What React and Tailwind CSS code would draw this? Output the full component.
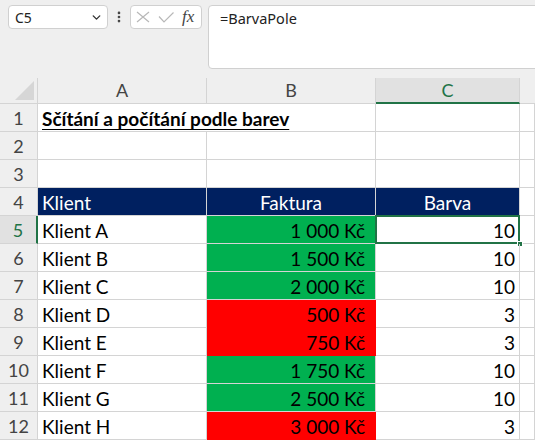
import { ChevronDown, EllipsisVertical } from 'lucide-react';

const rows = [
    { n: 5, client: 'Klient A', amount: '1 000 Kč', fill: 'green', color: 10 },
    { n: 6, client: 'Klient B', amount: '1 500 Kč', fill: 'green', color: 10 },
    { n: 7, client: 'Klient C', amount: '2 000 Kč', fill: 'green', color: 10 },
    { n: 8, client: 'Klient D', amount: '500 Kč', fill: 'red', color: 3 },
    { n: 9, client: 'Klient E', amount: '750 Kč', fill: 'red', color: 3 },
    { n: 10, client: 'Klient F', amount: '1 750 Kč', fill: 'green', color: 10 },
    { n: 11, client: 'Klient G', amount: '2 500 Kč', fill: 'green', color: 10 },
    { n: 12, client: 'Klient H', amount: '3 000 Kč', fill: 'red', color: 3 },
];

const fillClass = {
    green: 'bg-[#00b050] border-[#00b050]',
    red: 'bg-[#ff0000] border-[#ff0000]',
};

const cell = 'h-[28px] border-r border-b border-[#d4d4d4] flex items-center px-[4px] pt-[3px] overflow-visible whitespace-nowrap';
const rowHead = 'h-[28px] border-r border-b border-[#d4d4d4] bg-[#efefef] flex items-center justify-center pt-[2px] text-[18px] text-[#444]';

function FormulaBar() {
    return (
        <div className="flex h-[78px] items-start bg-[#efefef] pt-[5px] pl-[8px]" style={{ fontFamily: '"Noto Sans", "Open Sans", sans-serif' }}>
            {/* Name box */}
            <div className="flex h-[24px] w-[100px] items-center justify-between rounded-[4px] border border-[#d0d0d0] bg-white pl-[6px] pr-[4px] text-[14px] text-[#222]">
                <span>C5</span>
                <ChevronDown size={13} strokeWidth={2.6} className="text-[#333]" />
            </div>
            <div className="flex h-[24px] w-[22px] items-center justify-center">
                <EllipsisVertical size={14} strokeWidth={2.6} className="text-[#444]" />
            </div>
            {/* Cancel / enter / fx */}
            <div className="flex h-[24px] w-[72px] items-center rounded-[4px] border border-[#d0d0d0] bg-white pl-[5px]">
                <svg width="14" height="12" viewBox="0 0 14 12" className="mr-[8px]">
                    <path d="M1 1 L13 11 M13 1 L1 11" stroke="#b8b8b8" strokeWidth="1.2" fill="none" />
                </svg>
                <svg width="16" height="11" viewBox="0 0 16 11">
                    <path d="M1 4.5 L6 10 L15.5 0.5" stroke="#b8b8b8" strokeWidth="1.2" fill="none" />
                </svg>
                <span className="ml-[8px] text-[17px] italic text-[#444]" style={{ fontFamily: '"Liberation Serif", serif' }}>fx</span>
            </div>
            {/* Formula input */}
            <div className="ml-[6px] -mr-[10px] h-[64px] flex-1 rounded-[4px] border border-[#d0d0d0] bg-white pl-[11px] pt-[2px] text-[14.5px] text-[#222]">
                =BarvaPole
            </div>
        </div>
    );
}

export default function App() {
    return (
        <div className="h-[442px] w-[535px] overflow-hidden bg-white" style={{ fontFamily: 'Lato, "Noto Sans", sans-serif' }}>
            <FormulaBar />

            <div className="grid grid-cols-[38px_169px_169px_144px_1fr] text-[19px] text-black">
                {/* Column headers */}
                <div className="relative h-[26px] border-r border-b border-[#d4d4d4] bg-[#efefef]">
                    <svg className="absolute right-[3px] bottom-[3px]" width="19" height="19" viewBox="0 0 19 19">
                        <polygon points="19,0 19,19 0,19" fill="#d6d6d6" />
                    </svg>
                </div>
                <div className="flex h-[26px] items-center justify-center border-r border-b border-[#d4d4d4] bg-[#efefef] text-[18px] text-[#444]">A</div>
                <div className="flex h-[26px] items-center justify-center border-r border-b border-[#d4d4d4] bg-[#efefef] text-[18px] text-[#444]">B</div>
                <div className="flex h-[26px] items-center justify-center border-r border-b-2 border-[#d4d4d4] border-b-[#217346] bg-[#e1e1e1] text-[18px] text-[#217346]">C</div>
                <div className="h-[26px] border-b border-[#d4d4d4] bg-[#efefef]" />

                {/* Row 1 */}
                <div className={rowHead}>1</div>
                <div className={`${cell} border-r-0 font-bold underline underline-offset-[3px]`}>Sčítání a počítání podle barev</div>
                <div className={cell} />
                <div className={cell} />
                <div className={cell} />

                {/* Rows 2-3 */}
                {[2, 3].map((n) => (
                    <div key={n} className="contents">
                        <div className={rowHead}>{n}</div>
                        <div className={cell} />
                        <div className={cell} />
                        <div className={cell} />
                        <div className={cell} />
                    </div>
                ))}

                {/* Row 4: table header */}
                <div className={rowHead}>4</div>
                <div className={`${cell} border-[#002060] bg-[#002060] text-white`}>Klient</div>
                <div className={`${cell} justify-center border-[#002060] bg-[#002060] text-white`}>Faktura</div>
                <div className={`${cell} justify-center border-[#002060] bg-[#002060] text-white`}>Barva</div>
                <div className={cell} />

                {/* Data rows */}
                {rows.map((r) => (
                    <div key={r.n} className="contents">
                        <div
                            className={
                                r.n === 5
                                    ? 'flex h-[28px] items-center justify-center border-r-2 border-b border-[#d4d4d4] border-r-[#217346] bg-[#e1e1e1] pt-[2px] text-[18px] text-[#217346]'
                                    : rowHead
                            }
                        >
                            {r.n}
                        </div>
                        <div className={cell}>{r.client}</div>
                        <div className={`${cell} justify-end pr-[10px] ${fillClass[r.fill]}`}>{r.amount}</div>
                        <div className={`${cell} relative justify-end pr-[4px]`}>
                            {r.color}
                            {r.n === 5 && (
                                <>
                                    <div className="pointer-events-none absolute -top-[1px] -left-[1px] -right-[1px] -bottom-[1px] border-2 border-[#217346]" />
                                    <div className="absolute -right-[4px] -bottom-[4px] h-[6px] w-[6px] border border-white bg-[#217346]" />
                                </>
                            )}
                        </div>
                        <div className={cell} />
                    </div>
                ))}
            </div>
        </div>
    );
}
